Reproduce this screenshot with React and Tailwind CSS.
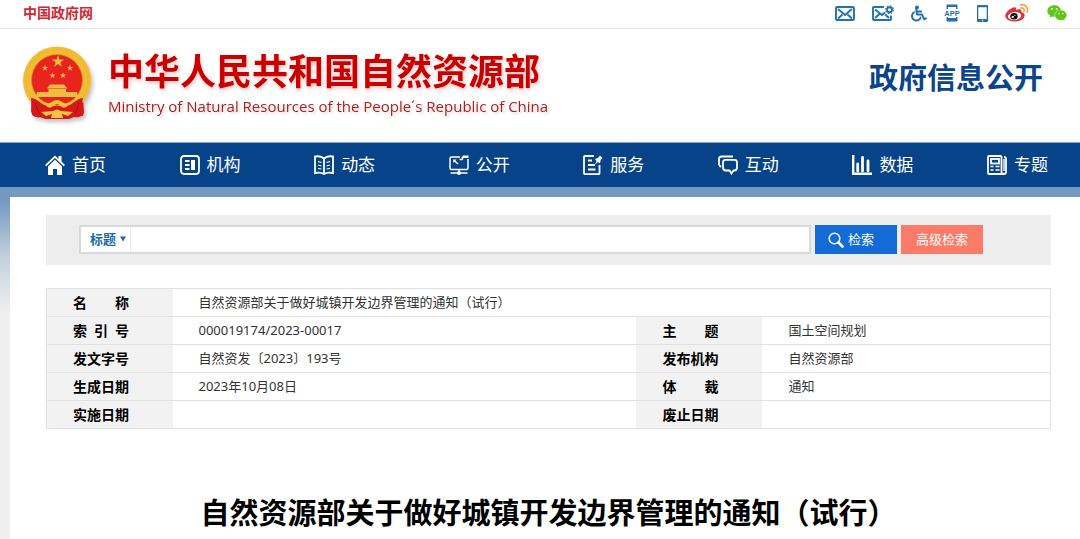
import { FaWheelchair } from "react-icons/fa";
import { FaWeixin } from "react-icons/fa6";

const STAR = "M0 -1 L.225 -.309 .951 -.309 .363 .118 .588 .809 0 .382 -.588 .809 -.363 .118 -.951 -.309 -.225 -.309Z";

function Emblem() {
  return (
    <svg viewBox="0 0 69 75" className="h-[75px] w-[69px] shrink-0 drop-shadow-[2px_3px_2px_rgba(0,0,0,0.25)]" aria-hidden="true">
      <path d="M9 52 L60 52 61 66 C60 70 56 72 51 71 L46 73 H23 L17 71 C12 72 9 69 8 65Z" fill="#d81818" />
      <circle cx="34" cy="34.5" r="34" fill="#f2bd35" />
      <circle cx="34" cy="34.5" r="31" fill="none" stroke="#eab02d" strokeWidth="1" strokeDasharray="3 2" />
      <circle cx="34" cy="34" r="25.5" fill="#e9241f" stroke="#d58f1e" strokeWidth="0.8" />
      <g fill="#edbe3f">
        <path d={STAR} transform="translate(35 15.5) scale(6.5)" />
        <path d={STAR} transform="translate(22 22) scale(3.3)" />
        <path d={STAR} transform="translate(47 22) scale(3.3)" />
        <path d={STAR} transform="translate(29.5 29.5) scale(3.3)" />
        <path d={STAR} transform="translate(40 29.5) scale(3.3)" />
        <path d="M25 41 L27 38.5 H41 L43 41 L44.500 42.500 H24Z M25.500 43 H43 V46 H25.500Z M14 46 H54 L55 51 H13Z" />
      </g>
      <path d="M8 52 C14 52 17 58 24 60 L44 60 C51 58 54 52 60 52 L59 58 C60 63 61 67 60 70 C56 69 53 72 49 70 L44 73 H23 L18 71 C14 72 11 70 9 69Z" fill="#d81818" />
      <path d="M22 56 C27 60 29 54 34 54 C39 54 41 60 46 56 C44 64 39 62 36 59 Q34 57 32 59 C28 62 24 64 22 56Z" fill="#f2bd35" />
      <path d="M18 66 L30 65 Q34 62 38 65 L50 66 L45 70 L39 68 L40 72 H28 L29 68 L23 70Z" fill="#f2c344" />
      <path d="M12 57 L17 69 M56 57 L52 69" stroke="#a80f12" strokeWidth="1" />
    </svg>
  );
}

function MailIcon() {
  return (
    <svg viewBox="0 0 20 15" className="h-[15px] w-5" fill="none" stroke="#2272ad" strokeWidth="1.900" aria-hidden="true">
      <rect x="1" y="1" width="18" height="13" rx="1" />
      <path d="M3 3 L10 9 L17 3 M3 12.500 L7.500 8.500 M17 12.500 L12.500 8.500" />
    </svg>
  );
}

function MailGearIcon() {
  return (
    <svg viewBox="0 0 22 16" className="h-4 w-[22px]" fill="none" stroke="#2272ad" strokeWidth="1.900" aria-hidden="true">
      <path d="M12 2 H2 Q1 2 1 3 V14 Q1 15 2 15 H18 Q19 15 19 14 V10.500" />
      <path d="M3 4.500 L10 10 L13 7.500 M3 13 L7.500 9 M17 13 L13 9.500" />
      <circle cx="17.500" cy="4.800" r="2.500" />
      <circle cx="17.500" cy="4.800" r="3.900" strokeWidth="1.200" strokeDasharray="1.600 1.460" />
    </svg>
  );
}

function AppIcon() {
  return (
    <svg viewBox="0 0 16 18" className="h-[18px] w-4" aria-hidden="true">
      <path d="M3.500 0.500 H12.500 Q13.500 0.500 13.500 1.500 V5 H12 V3 H4 V5 H2.500 V1.500 Q2.500 0.500 3.500 0.500Z M2.500 13 H4 V14 H12 V13 H13.500 V16.500 Q13.500 17.500 12.500 17.500 H3.500 Q2.500 17.500 2.500 16.500Z" fill="#2272ad" />
      <text x="8" y="11.800" textAnchor="middle" fontSize="7.500" fontWeight="700" fontFamily="Liberation Sans, sans-serif" fill="#2272ad">APP</text>
    </svg>
  );
}

function PhoneIcon() {
  return (
    <svg viewBox="0 0 11 17" className="h-[17px] w-[11px]" aria-hidden="true">
      <path fillRule="evenodd" d="M1 0 H10 Q11 0 11 1 V16 Q11 17 10 17 H1 Q0 17 0 16 V1 Q0 0 1 0Z M1.300 2.200 V14 H9.700 V2.200Z" fill="#2272ad" />
      <circle cx="5.500" cy="15.500" r="0.700" fill="#fff" />
    </svg>
  );
}

function WeiboIcon() {
  return (
    <svg viewBox="0 0 24 18" className="h-[18px] w-6" aria-hidden="true">
      <path d="M8.500 3.500 C10.500 3 11.500 4 11 6 C14 4.800 17 5 16.300 8 C18.500 8.800 20 10 19.600 12 C19 15.500 14.500 17.500 9.500 17.500 C4.500 17.500 0.300 15.200 0.300 11.800 C0.300 8.500 5 4.200 8.500 3.500Z" fill="#e0323d" />
      <ellipse cx="9.600" cy="12" rx="6.600" ry="3.900" fill="#fff" transform="rotate(-6 9.600 12)" />
      <ellipse cx="9" cy="12.200" rx="3.700" ry="3.200" fill="#151010" />
      <ellipse cx="7.800" cy="13" rx="1.200" ry="1" fill="#fff" />
      <circle cx="10" cy="11.500" r="0.600" fill="#fff" />
      <path d="M15.500 0.900 C20.500 0 23.600 3.500 22.200 8.200 M15.900 4 C18.300 3.500 19.700 5.200 19 7.400" fill="none" stroke="#f0a23c" strokeWidth="1.600" strokeLinecap="round" />
    </svg>
  );
}

const NAV_ICONS = {
  home: (
    <g fill="#fff" stroke="none">
      <path d="M10 0.500 L13.500 4 V1 H16.500 V6.500 L20 10 L18.700 11.300 L10 3 L1.300 11.300 L0 10Z" />
      <path d="M10 4.800 L17 11.500 V20 H12 V14 H8 V20 H3 V11.500Z" />
    </g>
  ),
  org: (
    <>
      <rect x="1" y="1" width="18" height="18" rx="3" />
      <path d="M5 6 H9.500 M5 10 H9.500 M5 14 H9.500" />
      <rect x="11" y="5" width="4" height="10" fill="#fff" stroke="none" />
    </>
  ),
  book: (
    <>
      <path d="M10 3.500 C7.500 1 4 1 1 1.500 V18 C4 17.300 7.500 17.300 10 19 C12.500 17.300 16 17.300 19 18 V1.500 C16 1 12.500 1 10 3.500 V19" />
      <path d="M4 6.500 L7.500 7.500 M4 10 L7.500 11 M4 13.500 L7.500 14 M16 6.500 L12.500 7.500 M16 10 L12.500 11 M16 13.500 L12.500 14" strokeWidth="1.200" />
    </>
  ),
  open: (
    <>
      <path d="M11 2 H2.500 Q1 2 1 3.500 V13 Q1 14.500 2.500 14.500 H17.500 Q19 14.500 19 13 V4 M10.500 4.500 H13 L14 3" strokeWidth="1.500" />
      <path d="M12.500 2.500 L14 0.500 H19.500 V3 H12.500Z" fill="#fff" stroke="none" />
      <path d="M4 4.500 L7.500 4.500 L6.500 5.800 L9.500 8.500 L8.500 9.500 L5.500 6.800 L4.500 8Z" fill="#fff" stroke="none" />
      <path d="M10 14.500 V18 M1.500 18 H18.500" strokeWidth="1.500" />
      <circle cx="10" cy="18" r="2" fill="#fff" stroke="none" />
    </>
  ),
  service: (
    <>
      <path d="M11 1 H2 Q1 1 1 2 V18 Q1 19.200 2 19.200 H15.500 Q16.500 19.200 16.500 18 V10" />
      <path d="M5 5.500 H9 M5 10 H12 M5 14.500 H12.500" />
      <path d="M12 4 L15 3 L17 0.500 L19.500 3 L17.500 5.500 L17 8.500 L15 7 L12 9.500 L13.500 6Z" fill="#fff" stroke="none" />
    </>
  ),
  chat: (
    <>
      <path d="M1 10 V4 Q1 1.500 3.500 1.500 H15" />
      <path d="M1 10 L3 12" />
      <path d="M7.500 4.800 H16.500 Q19 4.800 19 7.300 V12.500 Q19 15.500 16 15.500 H15.500 L13.500 18.500 L11.500 15.500 H8 Q5 15.500 5 12.500 V7.300 Q5 4.800 7.500 4.800Z" />
    </>
  ),
  data: (
    <>
      <path d="M1.200 0 V18.800 H20" strokeWidth="2.400" />
      <path d="M5.700 16 V9 M10.500 16 V2.500 M16 16 V6" strokeWidth="2.800" strokeLinecap="round" />
    </>
  ),
  topic: (
    <>
      <path d="M14.500 1 H2 Q1 1 1 2 V18 Q1 19 2 19 H17 Q19 19 19 17 V4 Q19 2 17 2 M14.500 1 V17 Q14.500 19 17 19" />
      <rect x="4" y="4" width="8" height="4.500" />
      <path d="M3.500 11.500 H6.500 M8.500 11.500 H12.500 M3.500 15 H6.500 M8.500 15 H12.500 M17 4 V16" strokeWidth="1.400" />
    </>
  ),
};

const navItems = [
  { icon: "home", label: "首页" },
  { icon: "org", label: "机构" },
  { icon: "book", label: "动态" },
  { icon: "open", label: "公开" },
  { icon: "service", label: "服务" },
  { icon: "chat", label: "互动" },
  { icon: "data", label: "数据" },
  { icon: "topic", label: "专题" },
];

const rows = [
  ["索\u2002引\u2002号", "000019174/2023-00017", "主\u3000\u3000题", "国土空间规划"],
  ["发文字号", "自然资发〔2023〕193号", "发布机构", "自然资源部"],
  ["生成日期", "2023年10月08日", "体\u3000\u3000裁", "通知"],
  ["实施日期", "", "废止日期", ""],
];

const toolLinks = [
  { label: "邮箱", icon: <MailIcon /> },
  { label: "邮件设置", icon: <MailGearIcon /> },
  { label: "无障碍", icon: <FaWheelchair className="h-[17px] w-4 text-[#2272ad]" /> },
  { label: "客户端", icon: <AppIcon /> },
  { label: "手机版", icon: <PhoneIcon /> },
  { label: "微博", icon: <WeiboIcon /> },
  { label: "微信", icon: <FaWeixin className="h-[18px] w-[22px] text-[#62c51b]" /> },
];

function TopBar() {
  return (
    <div className="flex h-[29px] items-center justify-between border-b border-[#e8e8e8] pr-3 pb-[2px] pl-[23px]">
      <a href="#gov" className="text-sm font-bold text-[#cb2a36]">中国政府网</a>
      <div className="flex items-center gap-[17px]">
        {toolLinks.map((item) => (
          <a key={item.label} href="#tools" aria-label={item.label}>{item.icon}</a>
        ))}
      </div>
    </div>
  );
}

function Header() {
  return (
    <header className="flex h-[113px] items-center justify-between pr-[37px] pl-[23px]">
      <div className="flex items-center gap-4 pb-1">
        <Emblem />
        <div>
          <div className="text-4xl leading-[44px] font-bold text-[#c80000] drop-shadow-[1px_2px_2px_rgba(200,0,0,0.25)]">
            中华人民共和国自然资源部
          </div>
          <div className="font-['Open_Sans',sans-serif] text-[15px] leading-6 text-[#b01d1d] drop-shadow-[2px_2px_1px_rgba(0,0,0,0.15)]">
            Ministry of Natural Resources of the People´s Republic of China
          </div>
        </div>
      </div>
      <div className="pb-4 text-[29px] leading-10 font-bold text-[#0a448b]">政府信息公开</div>
    </header>
  );
}

function Nav() {
  return (
    <nav className="flex h-[45px] items-center justify-between border-t border-[#8aa9c9] bg-[#074389] pr-8 pl-[45px]">
      {navItems.map((item) => (
        <a key={item.label} href="#nav" className="flex items-center gap-[7px] text-[17px] text-white">
          <svg viewBox="0 0 20 20" className="size-5" fill="none" stroke="#fff" strokeWidth="1.800" aria-hidden="true">
            {NAV_ICONS[item.icon]}
          </svg>
          {item.label}
        </a>
      ))}
    </nav>
  );
}

function SearchBar() {
  return (
    <form className="flex items-center gap-1 bg-[#ededed] pt-[10px] pr-[68px] pb-[11px] pl-[33px]" onSubmit={(e) => e.preventDefault()}>
      <div className="flex h-[29px] flex-1 border-2 border-[#d9d9d9] bg-white">
        <div className="relative flex border-r border-[#ebebeb]">
          <select aria-label="检索范围" className="w-[49px] appearance-none bg-transparent pl-[9px] text-[13px] font-bold text-[#1b69ad] outline-none">
            <option>标题</option>
          </select>
          <svg viewBox="0 0 6 6" className="pointer-events-none absolute top-[9px] right-1 size-[6px]" aria-hidden="true">
            <path d="M0 0.500 H6 L3 5.500Z" fill="#1b69ad" />
          </svg>
        </div>
        <input type="text" aria-label="检索内容" className="min-w-0 flex-1 px-2 text-[13px] outline-none" />
      </div>
      <button type="submit" className="flex h-[29px] w-[82px] items-center gap-1 bg-[#146bd6] pl-[13px] text-[13px] text-white">
        <svg viewBox="0 0 16 16" className="size-4" fill="none" stroke="#fff" aria-hidden="true">
          <circle cx="6.500" cy="6.500" r="5.300" strokeWidth="1.500" />
          <path d="M10.500 10.500 L14.500 14.500" strokeWidth="2.600" strokeLinecap="round" />
        </svg>
        检索
      </button>
      <button type="button" className="h-[29px] w-[82px] bg-[#fc7a68] text-[13px] text-white">高级检索</button>
    </form>
  );
}

function LabelCell({ children }) {
  return <th scope="row" className="bg-[#f2f2f2] pl-[26px] text-left text-sm font-bold text-black">{children}</th>;
}

function ValueCell({ children, colSpan }) {
  return <td colSpan={colSpan} className="pl-[26px]">{children}</td>;
}

function InfoTable() {
  return (
    <table className="mt-[23px] w-full table-fixed border-collapse border border-[#e0e0e0] text-[13px] text-[#333]">
      <colgroup>
        <col className="w-[126px]" />
        <col />
        <col className="w-[126px]" />
        <col className="w-72" />
      </colgroup>
      <tbody>
        <tr className="h-7 border-b border-[#e0e0e0]">
          <LabelCell>{"名\u3000\u3000称"}</LabelCell>
          <ValueCell colSpan={3}>自然资源部关于做好城镇开发边界管理的通知（试行）</ValueCell>
        </tr>
        {rows.map(([label, value, label2, value2]) => (
          <tr key={label} className="h-7 border-b border-[#e0e0e0]">
            <LabelCell>{label}</LabelCell>
            <ValueCell>{value}</ValueCell>
            <LabelCell>{label2}</LabelCell>
            <ValueCell>{value2}</ValueCell>
          </tr>
        ))}
      </tbody>
    </table>
  );
}

export default function App() {
  return (
    <div className="flex min-h-screen flex-col bg-white font-['Noto_Sans','Noto_Sans_CJK_SC',sans-serif]">
      <TopBar />
      <Header />
      <Nav />
      <div className="flex flex-1 flex-col bg-[linear-gradient(#7399c3_14px,#c3d0df_70px,#efefef_125px)] pt-[10px] pl-[10px]">
        <main className="flex-1 bg-white pt-[18px] pr-[29px] pl-9">
          <SearchBar />
          <InfoTable />
          <h1 className="mt-16 text-center text-[29px] leading-10 font-bold text-black">
            自然资源部关于做好城镇开发边界管理的通知（试行）
          </h1>
        </main>
      </div>
    </div>
  );
}
